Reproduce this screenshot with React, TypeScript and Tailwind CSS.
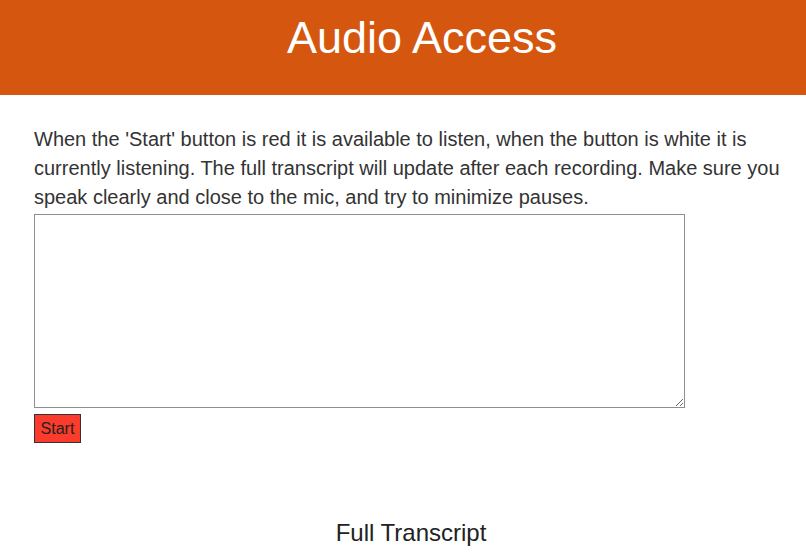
export default function App() {
  return (
    <div className="min-h-screen bg-white" style={{ fontFamily: '"Liberation Sans", Arial, sans-serif' }}>
      <header className="flex h-[95px] items-start justify-center bg-[#d5570f] pl-[38px]">
        <h1 className="mt-[10px] text-[45px] leading-[56px] text-white">Audio Access</h1>
      </header>
      <main className="pl-[34px] pr-[20px] pt-[30px]">
        <p className="text-[20px] leading-[29px] text-[#333]">
          When the 'Start' button is red it is available to listen, when the button is white it is currently
          listening. The full transcript will update after each recording. Make sure you speak clearly and close
          to the mic, and try to minimize pauses.
        </p>
        <textarea className="mt-[2px] block h-[194px] w-[651px] border border-[#8f8f8f] bg-white" />
        <button className="mt-[6px] block h-[29px] w-[47px] border border-[#333] bg-[#fb3b2b] text-[16px] text-[#222]">
          Start
        </button>
        <h2 className="mt-[75px] pl-[2px] text-center text-[24px] leading-[30px] text-[#222]">Full Transcript</h2>
      </main>
    </div>
  );
}
